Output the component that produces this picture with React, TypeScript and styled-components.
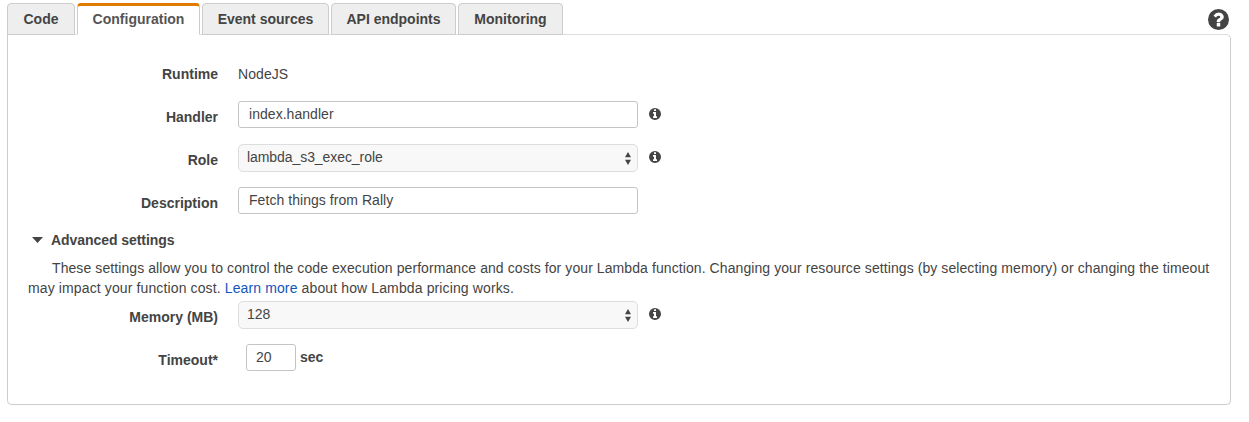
import React from 'react';
import styled, { createGlobalStyle } from 'styled-components';

const GlobalStyle = createGlobalStyle`
  * { box-sizing: border-box; }
  body {
    margin: 0;
    background: #fff;
    color: #444;
    font: 14px/20px "Liberation Sans", Arial, sans-serif;
  }
`;

const Page = styled.main`
  width: 1224px;
  margin-left: 7px;
  padding-top: 3px;
`;

const Header = styled.header`
  display: flex;
  justify-content: space-between;
  height: 31px;
`;

const TabList = styled.nav`
  display: flex;
  gap: 2px;
  height: 32px;
`;

const Tab = styled.button<{ $active?: boolean; $width: number }>`
  position: relative;
  width: ${p => p.$width}px;
  height: 32px;
  padding: ${p => (p.$active ? '0 0 2px' : '0 0 1px')};
  border: 1px solid #ccc;
  border-top: ${p => (p.$active ? '3px solid #e07b00' : '1px solid #ccc')};
  border-bottom-color: ${p => (p.$active ? '#fff' : '#ccc')};
  border-radius: 4px 4px 0 0;
  background: ${p => (p.$active ? '#fff' : '#eee')};
  color: ${p => (p.$active ? '#555' : '#444')};
  font: bold 14px/${p => (p.$active ? 26 : 30)}px "Liberation Sans", Arial, sans-serif;
  white-space: nowrap;
`;

const HelpIcon = styled.svg`
  width: 21px;
  height: 21px;
  margin: 6px 2px 0 0;
  fill: #444;
`;

const Panel = styled.section`
  height: 371px;
  padding: 29px 20px 0;
  border: 1px solid #ccc;
  border-top-color: #ddd;
  border-radius: 0 5px 5px 5px;
  box-shadow: 0 1px 1px rgba(0, 0, 0, 0.05);
`;

const Row = styled.div<{ $height?: number }>`
  display: grid;
  grid-template-columns: 190px 400px auto;
  column-gap: 20px;
  align-items: start;
  height: ${p => p.$height ?? 43}px;
`;

const Label = styled.label<{ $top?: number }>`
  padding-top: ${p => p.$top ?? 6}px;
  font-weight: bold;
  text-align: right;
`;

const Value = styled.span`
  letter-spacing: 0.08px;
`;

const TextInput = styled.input<{ $spacing?: number; $inset?: number }>`
  width: 100%;
  height: 27px;
  padding: 0 ${p => p.$inset ?? 10}px 1px;
  border: 1px solid #c4c4c4;
  border-radius: 3px;
  outline: none;
  background: #fff;
  color: #444;
  font: inherit;
  letter-spacing: ${p => p.$spacing ?? 0}px;
`;

const SelectBox = styled.div<{ $spacing?: number }>`
  display: flex;
  justify-content: space-between;
  height: 28px;
  padding: 2px 6px 0 8px;
  border: 1px solid #ddd;
  border-radius: 5px;
  background: #f8f8f8;
  letter-spacing: ${p => p.$spacing ?? 0}px;
`;

const Arrows = styled.svg`
  width: 6px;
  height: 13px;
  margin-top: 5px;
  fill: #444;
`;

const InfoMark = styled.svg`
  width: 12px;
  height: 12px;
  margin: 7px 0 0 -9px;
  fill: #444;
`;

const SectionTitle = styled.h2`
  display: flex;
  align-items: center;
  gap: 8px;
  height: 20px;
  margin: 0 0 8px 4px;
  font-size: 14px;
  line-height: 20px;
  letter-spacing: -0.06px;
`;

const Caret = styled.svg`
  width: 11px;
  height: 6px;
  fill: #444;
`;

const Notice = styled.p`
  margin: 0;
  height: 43px;
  white-space: nowrap;
`;

const NoticeLine = styled.span<{ $indent?: number; $spacing?: number }>`
  display: block;
  padding-left: ${p => p.$indent ?? 0}px;
  letter-spacing: ${p => p.$spacing ?? 0}px;
`;

const Link = styled.a`
  color: #1155bb;
  text-decoration: none;
`;

const Timeout = styled.div`
  display: grid;
  grid-template-columns: 50px auto;
  column-gap: 4px;
  padding-left: 8px;
`;

const Unit = styled.strong`
  padding-top: 3px;
`;

const InfoIcon = () => (
  <InfoMark viewBox="128 128 1536 1536">
    <path
      fillRule="evenodd"
      d="M896 128a768 768 0 1 0 0 1536a768 768 0 1 0 0-1536zM1152 1376v-160q0-14-9-23t-23-9h-96v-512q0-14-9-23t-23-9h-320q-14 0-23 9t-9 23v160q0 14 9 23t23 9h96v320h-96q-14 0-23 9t-9 23v160q0 14 9 23t23 9h448q14 0 23-9t9-23zM1024 480v-160q0-14-9-23t-23-9h-192q-14 0-23 9t-9 23v160q0 14 9 23t23 9h192q14 0 23-9t9-23z"
    />
  </InfoMark>
);

const Select = ({ value, spacing }: { value: string; spacing?: number }) => (
  <SelectBox $spacing={spacing} role="combobox">
    {value}
    <Arrows viewBox="0 0 6 13">
      <path d="M3 0 6 5.3H0zM0 7.7h6L3 13z" />
    </Arrows>
  </SelectBox>
);

export default function App() {
  return (
    <>
      <GlobalStyle />
      <Page>
        <Header>
          <TabList>
            <Tab $width={68}>Code</Tab>
            <Tab $width={123} $active>Configuration</Tab>
            <Tab $width={127}>Event sources</Tab>
            <Tab $width={125}>API endpoints</Tab>
            <Tab $width={105}>Monitoring</Tab>
          </TabList>
          <HelpIcon viewBox="128 128 1536 1536">
            <path
              fillRule="evenodd"
              d="M896 128a768 768 0 1 0 0 1536a768 768 0 1 0 0-1536zM1024 1376v-192q0-14-9-23t-23-9h-192q-14 0-23 9t-9 23v192q0 14 9 23t23 9h192q14 0 23-9t9-23zm256-672q0-88-55.500-163t-138.500-116-170-41q-243 0-371 213-15 24 8 42l132 100q7 6 19 6 16 0 25-12 53-68 86-92 34-24 86-24 48 0 85.500 26t37.500 59q0 38-20 61t-68 45q-63 28-115.500 86.500t-52.500 125.500v36q0 14 9 23t23 9h192q14 0 23-9t9-23q0-19 21.500-49.500t54.500-49.500q32-18 49-28.500t46-35 44.500-48 28-60.500 12.500-81z"
            />
          </HelpIcon>
        </Header>
        <Panel>
          <Row $height={37}>
            <Label $top={0}>Runtime</Label>
            <Value>NodeJS</Value>
          </Row>
          <Row>
            <Label>Handler</Label>
            <TextInput $spacing={0.04} defaultValue="index.handler" />
            <InfoIcon />
          </Row>
          <Row>
            <Label>Role</Label>
            <Select spacing={-0.07} value="lambda_s3_exec_role" />
            <InfoIcon />
          </Row>
          <Row>
            <Label>Description</Label>
            <TextInput $spacing={0.05} defaultValue="Fetch things from Rally" />
          </Row>
          <SectionTitle>
            <Caret viewBox="0 0 11 6"><path d="M0 0h11L5.500 6z" /></Caret>
            Advanced settings
          </SectionTitle>
          <Notice>
            <NoticeLine $indent={24} $spacing={0.083}>
              These settings allow you to control the code execution performance and costs for your Lambda function. Changing your resource settings (by selecting memory) or changing the timeout
            </NoticeLine>
            <NoticeLine $spacing={0.122}>
              may impact your function cost. <Link href="#">Learn more</Link> about how Lambda pricing works.
            </NoticeLine>
          </Notice>
          <Row>
            <Label>Memory (MB)</Label>
            <Select value="128" />
            <InfoIcon />
          </Row>
          <Row>
            <Label>Timeout*</Label>
            <Timeout>
              <TextInput $inset={9} defaultValue="20" />
              <Unit>sec</Unit>
            </Timeout>
          </Row>
        </Panel>
      </Page>
    </>
  );
}
